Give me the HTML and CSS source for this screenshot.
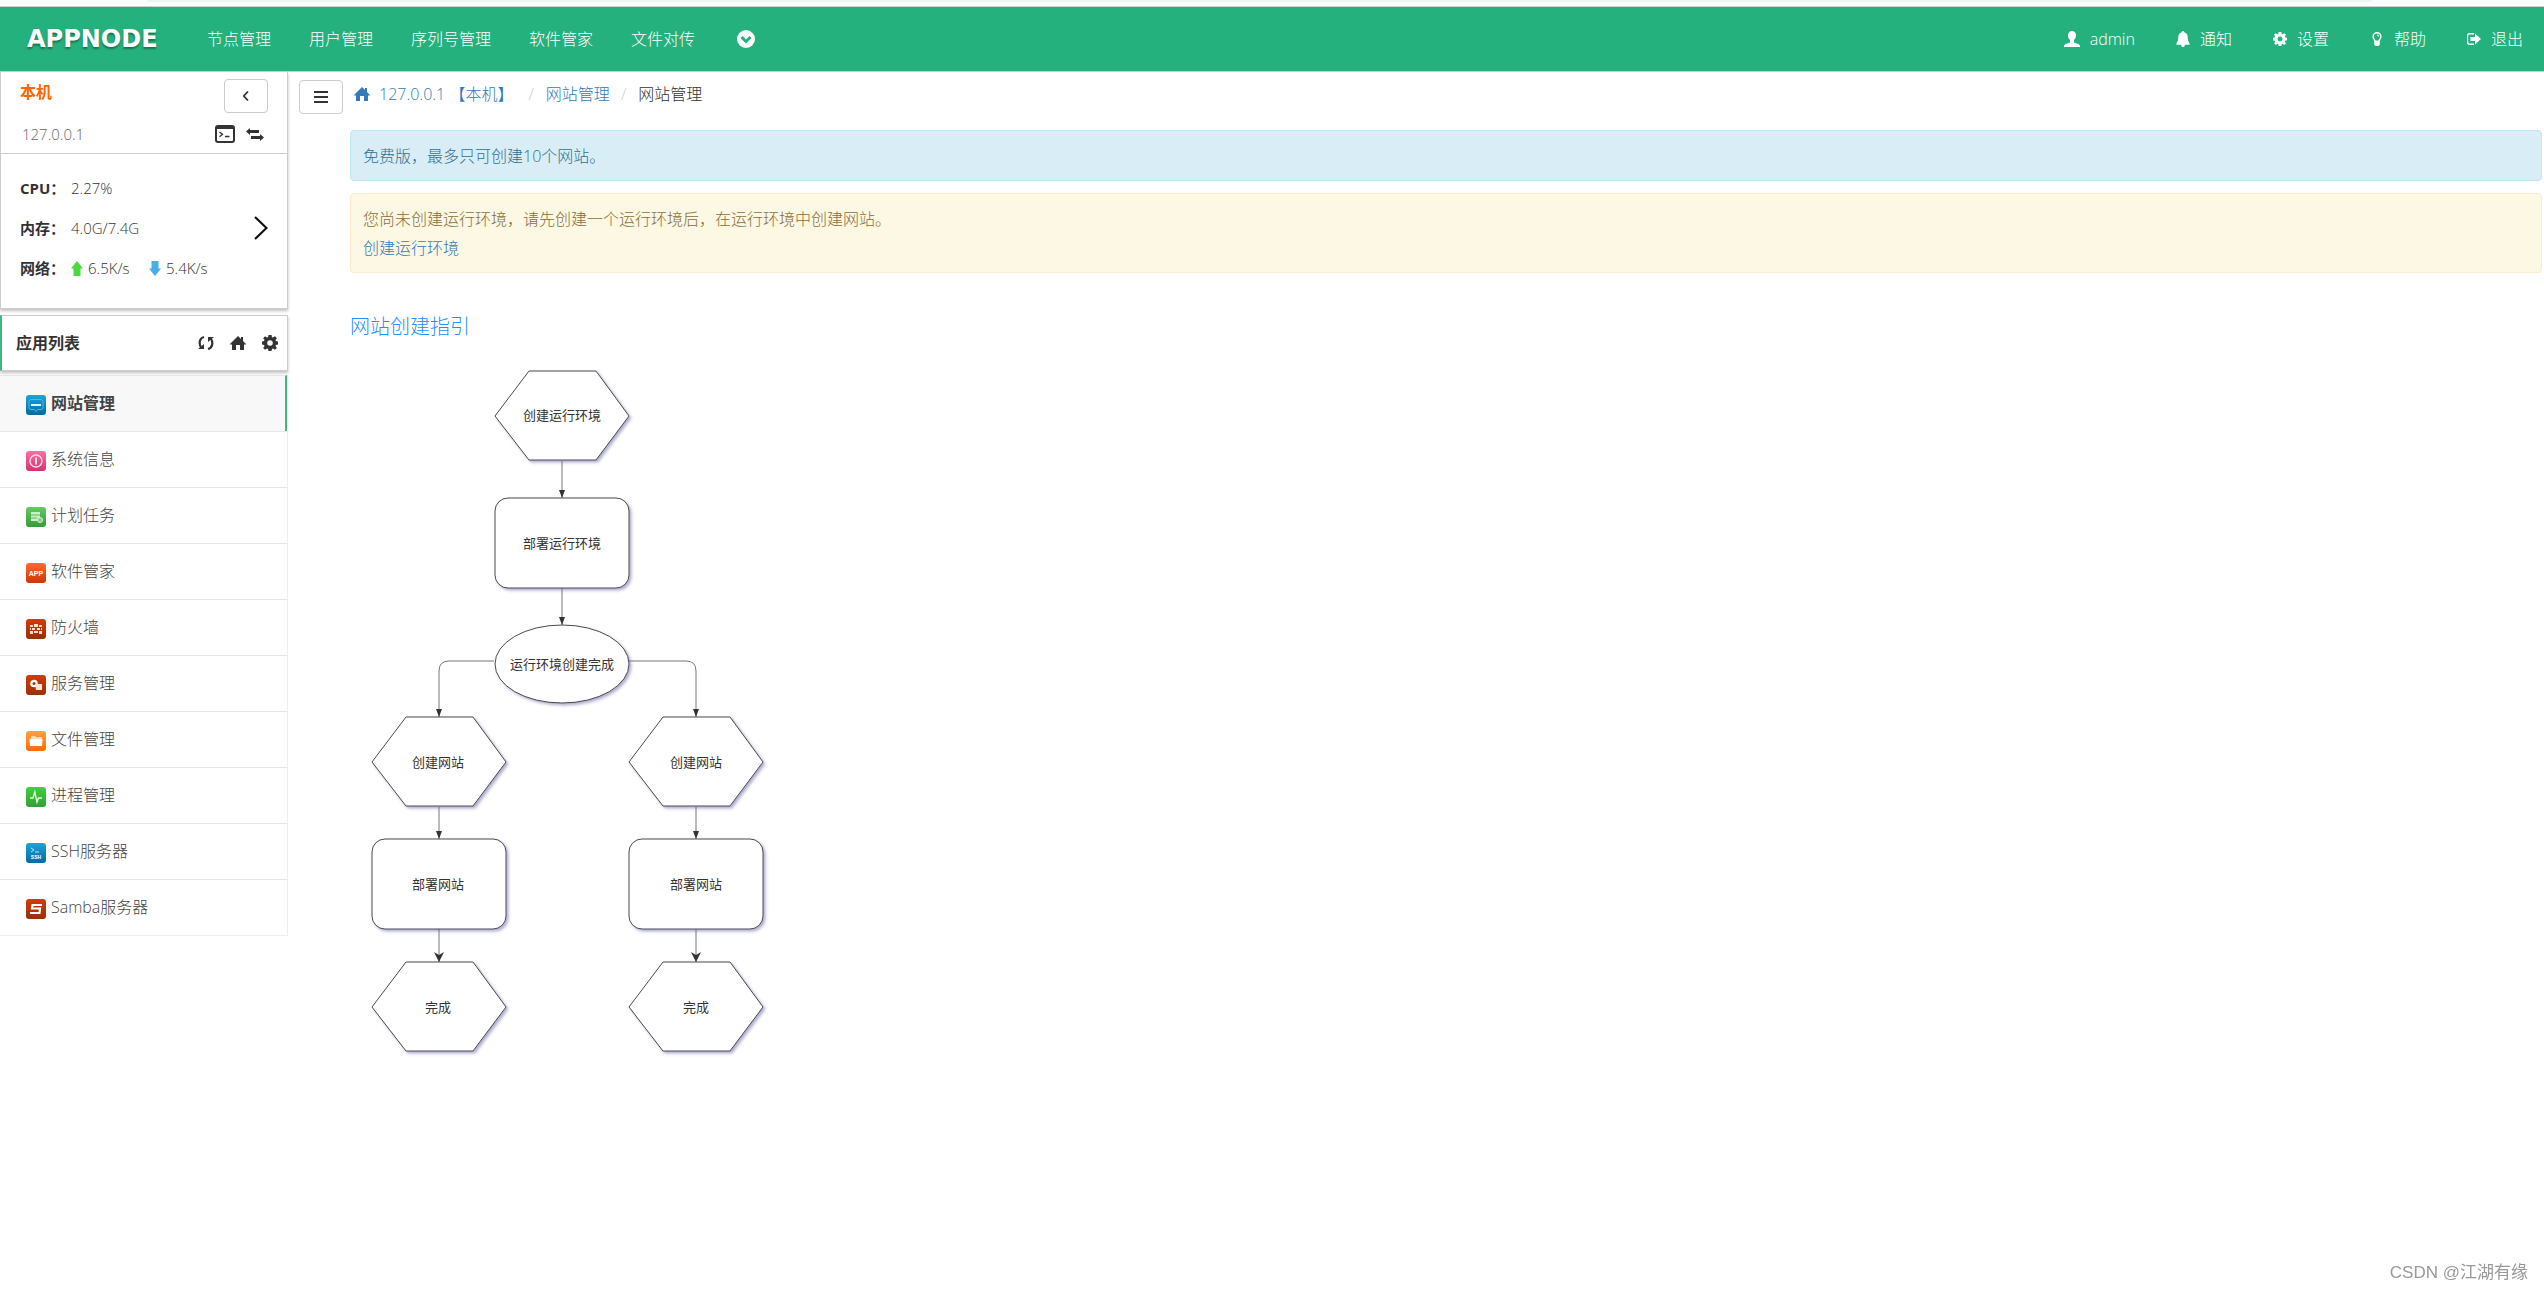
FILE: index.html
```html
<!DOCTYPE html>
<html lang="zh-CN">
<head>
<meta charset="utf-8">
<title>网站管理 - APPNODE</title>
<link rel="stylesheet" href="styles.css">
</head>
<body>
<svg class="sprite" aria-hidden="true">
  <defs>
    <symbol id="home" viewBox="0 0 16 16"><path d="M8 1 0 9l1 1 1-1v6h4v-5h4v5h4V9l1 1 1-1-3-3V2h-2v2z"/></symbol>
    <symbol id="gear" viewBox="0 0 16 16"><path fill-rule="evenodd" d="M6.500 0h3l.5 2.200 1 .4L13 1.300 14.900 3.200 13.500 5l.4 1L16 6.500v3l-2.100.5-.4 1 1.400 1.900-2 1.900L11 13.500l-1 .4L9.500 16h-3L6 13.900l-1-.4-1.900 1.300-1.900-1.900L2.500 11l-.4-1L0 9.500v-3L2.100 6l.4-1L1.200 3.200 3.100 1.300 5 2.600l1-.4zM8 5.200a2.800 2.800 0 1 0 0 5.600 2.800 2.800 0 0 0 0-5.600z"/></symbol>
    <linearGradient id="g-blue" x2="0" y2="1"><stop stop-color="#1ba4dc"/><stop offset="1" stop-color="#066aa0"/></linearGradient>
    <linearGradient id="g-pink" x2="0" y2="1"><stop stop-color="#ff6fa3"/><stop offset="1" stop-color="#d8306e"/></linearGradient>
    <linearGradient id="g-green" x2="0" y2="1"><stop stop-color="#62cb62"/><stop offset="1" stop-color="#379b37"/></linearGradient>
    <linearGradient id="g-orange" x2="0" y2="1"><stop stop-color="#ff6a35"/><stop offset="1" stop-color="#d13405"/></linearGradient>
    <linearGradient id="g-red" x2="0" y2="1"><stop stop-color="#d63b08"/><stop offset="1" stop-color="#983006"/></linearGradient>
    <linearGradient id="g-amber" x2="0" y2="1"><stop stop-color="#ffa043"/><stop offset="1" stop-color="#ff6a08"/></linearGradient>
    <linearGradient id="g-lime" x2="0" y2="1"><stop stop-color="#3ed23a"/><stop offset="1" stop-color="#369f36"/></linearGradient>
  </defs>
</svg>

<div class="tabstrip"><div class="tabstrip-bar"></div></div>

<header class="topbar">
  <a class="logo" href="#">APPNODE</a>
  <nav class="topnav">
    <a href="#">节点管理</a>
    <a href="#">用户管理</a>
    <a href="#">序列号管理</a>
    <a href="#">软件管家</a>
    <a href="#">文件对传</a>
    <button class="more" type="button" aria-label="更多">
      <svg width="18" height="18" viewBox="0 0 18 18"><circle cx="9" cy="9" r="9" fill="#fff"/><path d="M4.500 7 9 11.500 13.500 7" fill="none" stroke="#24b17d" stroke-width="3"/></svg>
    </button>
  </nav>
  <nav class="usernav">
    <a href="#"><svg class="wide" viewBox="0 0 16 16"><path d="M8 0c2.600 0 4 1.800 4 4.300 0 2-.8 3.600-2 4.700v2.500l3.500 1.200c1.600.5 2.500 1.300 2.500 3.300H0c0-2 .9-2.800 2.500-3.300L6 11.500V9C4.800 7.900 4 6.300 4 4.300 4 1.800 5.400 0 8 0z"/></svg>admin</a>
    <a href="#"><svg viewBox="0 0 14 17"><path d="M7 0c.9 0 1.200.5 1.300 1.200C10.800 1.800 12 3.700 12 6.500 12 9.500 12.500 11 14 13v1.500H9C8.800 16 8.200 17 7 17s-1.800-1-2-2.500H0V13c1.500-2 2-3.500 2-6.500 0-2.800 1.200-4.700 3.700-5.300C5.800.5 6.100 0 7 0z"/></svg>通知</a>
    <a href="#"><svg><use href="#gear"/></svg>设置</a>
    <a href="#"><svg viewBox="0 0 14 14"><path fill-rule="evenodd" d="M7 0a4.600 4.600 0 0 1 4.600 4.600c0 1.900-1.100 2.800-1.800 4.400v3.500L8.500 14h-3l-1.300-1.500V9C3.500 7.400 2.400 6.500 2.400 4.600A4.600 4.600 0 0 1 7 0zm0 1.500a3.100 3.100 0 0 0-3.100 3.100c0 1.400 1 2.300 1.600 3.900h3c.6-1.600 1.600-2.500 1.600-3.900A3.100 3.100 0 0 0 7 1.500zm0 1c1.300 0 2 .8 2.100 2H8c0-.6-.4-1-1-1z"/></svg>帮助</a>
    <a href="#"><svg viewBox="0 0 14 14"><path d="M7 1.700H2.500a2 2 0 0 0-2 2v6.600a2 2 0 0 0 2 2H7" fill="none" stroke="#fff" stroke-width="1.400"/><path d="M3.500 5H8V1.500L14 7l-6 5.500V9H3.500z"/></svg>退出</a>
  </nav>
</header>

<div class="layout">
  <aside class="sidebar">
    <section class="node">
      <div class="node-head">
        <div class="node-row">
          <strong class="node-name">本机</strong>
          <button class="btn" type="button" aria-label="收起"><svg width="6" height="10" viewBox="0 0 6 10"><path d="M5 .5.8 5 5 9.500" fill="none" stroke="#333" stroke-width="1.800"/></svg></button>
        </div>
        <div class="node-row addr">
          <span>127.0.0.1</span>
          <span class="tools">
            <button class="icon-btn" type="button" aria-label="终端"><svg width="20" height="18" viewBox="0 0 20 18"><rect x="1" y="1" width="18" height="16" rx="2" fill="#fff" stroke="#333" stroke-width="2"/><path d="M1 1h18v3H1z" fill="#333"/><path d="m4.500 7 3 2.300-3 2.500M10 11.500h4.500" fill="none" stroke="#333" stroke-width="1.400"/></svg></button>
            <button class="icon-btn" type="button" aria-label="切换"><svg width="18" height="13" viewBox="0 0 18 13"><path d="M0 3.500 4 0v2h9v3H4v2zM18 9.500 14 6v2H5v3h9v2z" fill="#333"/></svg></button>
          </span>
        </div>
      </div>
      <div class="stats">
        <dl>
          <div><dt>CPU：</dt><dd>2.27%</dd></div>
          <div><dt>内存：</dt><dd>4.0G/7.4G</dd></div>
          <div><dt>网络：</dt><dd><svg width="12" height="15" viewBox="0 0 12 15"><path d="M6 0l6 7.500H9.500V15h-7V7.500H0z" fill="#4cd93f"/></svg><span class="rate">6.5K/s</span><svg width="12" height="15" viewBox="0 0 12 15"><path d="M6 15l6-7.500H9.500V0h-7v7.500H0z" fill="#47aee6"/></svg><span>5.4K/s</span></dd></div>
        </dl>
        <button class="icon-btn" type="button" aria-label="详情"><svg width="14" height="24" viewBox="0 0 14 24"><path d="m1 1 11.500 11L1 23" fill="none" stroke="#111" stroke-width="2.200"/></svg></button>
      </div>
    </section>

    <section class="apps-head">
      <h2>应用列表</h2>
      <button class="icon-btn" type="button" aria-label="刷新"><svg width="16" height="16" viewBox="0 0 16 16"><path d="M6 2C1.500 3 .5 8.500 3.200 12.500M10 14c4.500-1 5.500-6.500 2.800-10.500" fill="none" stroke="#333" stroke-width="2.200"/><path d="M0 14h6V9zM16 2h-6v5z" fill="#333"/></svg></button>
      <button class="icon-btn" type="button" aria-label="首页"><svg width="16" height="16"><use href="#home"/></svg></button>
      <button class="icon-btn" type="button" aria-label="设置"><svg width="16" height="16"><use href="#gear"/></svg></button>
    </section>

    <nav class="apps">
      <a class="active" href="#"><svg viewBox="0 0 20 20"><rect width="20" height="20" rx="3" fill="url(#g-blue)"/><path d="M5 4.500h10a2 2 0 0 1 2 2v6a2 2 0 0 1-2 2h-3.500L10 16.500 8.500 14.500H5a2 2 0 0 1-2-2v-6a2 2 0 0 1 2-2z" fill="none" stroke="#4fb6e0"/><path d="M5 10h10" stroke="#d9f1fb" stroke-width="2"/></svg>网站管理</a>
      <a href="#"><svg viewBox="0 0 20 20"><rect width="20" height="20" rx="3" fill="url(#g-pink)"/><circle cx="10" cy="10" r="6" fill="none" stroke="#ffe0ec" stroke-width="1.400"/><path d="M10 6.500v7" stroke="#ffe0ec" stroke-width="2"/></svg>系统信息</a>
      <a href="#"><svg viewBox="0 0 20 20"><rect width="20" height="20" rx="3" fill="url(#g-green)"/><path d="M5 5h9v5.500a4 4 0 0 0-3 3.500H5z" fill="#c9f0c9"/><path d="M5 8h9M5 11h6" stroke="#5cb85c"/><circle cx="14" cy="13" r="2.500" fill="#7fd07f" stroke="#d7f5d7"/></svg>计划任务</a>
      <a href="#"><svg viewBox="0 0 20 20"><rect width="20" height="20" rx="3" fill="url(#g-orange)"/><text class="badge-text" x="10" y="13" font-size="7">APP</text></svg>软件管家</a>
      <a href="#"><svg viewBox="0 0 20 20"><rect width="20" height="20" rx="3" fill="url(#g-red)"/><path d="M4 6h3v2H4zM8 5h4v3H8zM13 6h3v2h-3zM6 9h3v2H6zM11 9h3v2h-3zM4 12h3v3H4zM8 12h4v2H8zM13 12h3v3h-3zM4 9h1v2H4zM15 9h1v2h-1z" fill="#ffe0d2"/></svg>防火墙</a>
      <a href="#"><svg viewBox="0 0 20 20"><rect width="20" height="20" rx="3" fill="url(#g-red)"/><circle cx="8" cy="8.500" r="2.700" fill="none" stroke="#fff" stroke-width="2.200"/><path d="M9 9h7v6h-6z" fill="#ffe4d8"/></svg>服务管理</a>
      <a href="#"><svg viewBox="0 0 20 20"><rect width="20" height="20" rx="3" fill="url(#g-amber)"/><path d="M5 5h4l1 1h6v2H5z" fill="#ffdcb5"/><path d="M3.500 8h13l-.5 7H4z" fill="#fff"/></svg>文件管理</a>
      <a href="#"><svg viewBox="0 0 20 20"><rect width="20" height="20" rx="3" fill="url(#g-lime)"/><path d="M4 11h3l1.800-6L11 15l1.500-4H16" fill="none" stroke="#dcffdc" stroke-width="1.400"/></svg>进程管理</a>
      <a href="#"><svg viewBox="0 0 20 20"><rect width="20" height="20" rx="3" fill="url(#g-blue)"/><path d="m5 5 3 2-3 2M9 9h4" fill="none" stroke="#b9e6f8"/><text class="badge-text" x="10" y="16" font-size="5">SSH</text></svg>SSH服务器</a>
      <a href="#"><svg viewBox="0 0 20 20"><rect width="20" height="20" rx="3" fill="url(#g-red)"/><path d="M16 6H6.500L6 9.500h8L13.500 14H4" fill="none" stroke="#fff" stroke-width="2.200"/></svg>Samba服务器</a>
    </nav>
  </aside>

  <main class="main">
    <div class="crumb-row">
      <button class="btn" type="button" aria-label="菜单"><svg width="14" height="12" viewBox="0 0 14 12"><path d="M0 1h14M0 6h14M0 11h14" stroke="#333" stroke-width="2"/></svg></button>
      <ol class="crumbs">
        <li><a class="host" href="#"><svg width="16" height="16"><use href="#home"/></svg>127.0.0.1 【本机】</a></li>
        <li><a href="#">网站管理</a></li>
        <li>网站管理</li>
      </ol>
    </div>
    <div class="content">
      <div class="alert info">免费版，最多只可创建10个网站。</div>
      <div class="alert warning">您尚未创建运行环境，请先创建一个运行环境后，在运行环境中创建网站。<br><a href="#">创建运行环境</a></div>
      <h1>网站创建指引</h1>
      <svg class="flow" width="440" height="720" viewBox="0 0 440 720" role="img" aria-label="网站创建流程">
        <defs>
          <filter id="shade" x="-10%" y="-10%" width="125%" height="125%"><feDropShadow dx="2" dy="2" stdDeviation="1.500" flood-color="#6a6aa8" flood-opacity=".55"/></filter>
          <marker id="tip" viewBox="0 0 8 8" refX="8" refY="4" markerWidth="8" markerHeight="6" markerUnits="userSpaceOnUse" orient="auto" preserveAspectRatio="none"><path d="M0 0 8 4 0 8z"/></marker>
          <marker id="tip-big" viewBox="0 0 10 10" refX="10" refY="5" markerWidth="10" markerHeight="10" markerUnits="userSpaceOnUse" orient="auto"><path d="M0 0 10 5 0 10 3 5z"/></marker>
        </defs>
        <g class="links">
          <path marker-end="url(#tip)" d="M212 111v37"/>
          <path marker-end="url(#tip)" d="M212 238v37"/>
          <path marker-end="url(#tip)" d="M144 311H99q-10 0-10 10v46"/>
          <path marker-end="url(#tip)" d="M279 311h57q10 0 10 10v46"/>
          <path marker-end="url(#tip)" d="M89 457v32"/>
          <path marker-end="url(#tip)" d="M346 457v32"/>
          <path marker-end="url(#tip-big)" d="M89 579v33"/>
          <path marker-end="url(#tip-big)" d="M346 579v33"/>
        </g>
        <g class="shapes">
          <path d="M145 66 179 21h67l33 45-33 44h-67z"/>
          <rect x="145" y="148" width="134" height="90" rx="13"/>
          <ellipse cx="212" cy="314" rx="67" ry="39"/>
          <path d="M22 412 56 367h67l33 45-33 44H56z"/>
          <path d="M279 412l34-45h67l33 45-33 44h-67z"/>
          <rect x="22" y="489" width="134" height="90" rx="13"/>
          <rect x="279" y="489" width="134" height="90" rx="13"/>
          <path d="M22 657l34-45h67l33 45-33 44H56z"/>
          <path d="M279 657l34-45h67l33 45-33 44h-67z"/>
        </g>
        <g class="labels">
          <text x="212" y="70">创建运行环境</text>
          <text x="212" y="198">部署运行环境</text>
          <text x="212" y="319">运行环境创建完成</text>
          <text x="88" y="417">创建网站</text>
          <text x="346" y="417">创建网站</text>
          <text x="88" y="539">部署网站</text>
          <text x="346" y="539">部署网站</text>
          <text x="88" y="662">完成</text>
          <text x="346" y="662">完成</text>
        </g>
      </svg>
    </div>
  </main>
</div>

<div class="watermark">CSDN @江湖有缘</div>
</body>
</html>
```
FILE: styles.css
```css
* { box-sizing: border-box; }

body {
  margin: 0;
  min-height: 100vh;
  background: #fff;
  color: #333;
  font: 300 16px/24px "Open Sans", "Noto Sans CJK SC", sans-serif;
}

a { color: #337ab7; text-decoration: none; }
svg { display: block; flex: none; fill: currentColor; }
button { font: inherit; color: inherit; cursor: pointer; }
.sprite { position: absolute; width: 0; height: 0; }

.tabstrip {
  height: 7px;
  padding: 0 172px 0 147px;
  border-bottom: 1px solid #d0d0d0;
}
.tabstrip-bar { height: 2px; background: #f1f3f4; border-radius: 0 0 8px 8px; }

/* top bar */
.topbar {
  display: flex;
  align-items: center;
  height: 65px;
  padding: 0 21px 0 27px;
  background: #24b17d;
  border-bottom: 1px solid #ccc;
}
.topbar a { color: #fff; }
.logo {
  width: 180px;
  font: bold 24px/32px "DejaVu Sans", sans-serif;
  text-shadow: 0 2px 2px rgba(0, 0, 0, .35);
}
.topnav { display: flex; align-items: center; gap: 38px; flex: 1; }
.more { margin-left: 4px; padding: 0; border: 0; background: none; }
.usernav { display: flex; gap: 41px; }
.usernav a { display: flex; align-items: center; gap: 10px; }
.usernav svg { width: 14px; height: 16px; }
.usernav .wide { width: 16px; }

.layout { display: flex; align-items: flex-start; }

/* sidebar */
.sidebar { width: 288px; flex: none; }
.btn {
  display: flex;
  align-items: center;
  justify-content: center;
  width: 44px;
  height: 34px;
  padding: 0;
  background: #fff;
  border: 1px solid #ccc;
  border-radius: 4px;
}
.icon-btn { padding: 0; border: 0; background: none; }

.node, .apps-head {
  border: 1px solid #ccc;
  box-shadow: 0 2px 3px rgba(0, 0, 0, .25);
}
.node { border-top: 0; }
.node-head { height: 82px; padding: 7px 19px 0; border-bottom: 1px solid #ccc; }
.node-row { display: flex; justify-content: space-between; }
.node-name { color: #f60; font-weight: bold; line-height: 26px; }
.addr { padding: 9px 4px 0 2px; font-size: 15px; color: #666; }
.tools { display: flex; align-items: center; gap: 11px; }
.stats {
  display: flex;
  align-items: center;
  justify-content: space-between;
  height: 154px;
  padding: 0 19px 6px;
  font-size: 15px;
}
.stats dl { margin: 0; }
.stats dl div { display: flex; height: 40px; align-items: center; }
.stats dt { width: 51px; font-weight: bold; white-space: nowrap; }
.stats dd { display: flex; align-items: center; gap: 5px; margin: 0; }
.rate { width: 56px; }

.apps-head {
  display: flex;
  align-items: center;
  gap: 16px;
  height: 56px;
  margin: 6px 0 4px;
  padding: 0 9px 0 14px;
  border-left: 2px solid #3fb682;
}
.apps-head h2 { flex: 1; margin: 0; font-size: 16px; font-weight: bold; }

.apps { border-right: 1px solid #eee; border-bottom: 1px solid #eee; }
.apps a {
  display: flex;
  align-items: center;
  gap: 5px;
  height: 56px;
  padding: 0 0 2px 26px;
  border-top: 1px solid #e7e7e7;
  color: #444;
}
.apps svg { width: 20px; height: 20px; margin-top: 4px; }
.apps .active { background: #f8f8f8; border-right: 2px solid #3fb682; font-weight: bold; }
.badge-text { font-family: "Liberation Sans", sans-serif; font-weight: bold; fill: #fff; text-anchor: middle; }

/* main column */
.main { flex: 1; min-width: 0; padding: 8px 2px 0 11px; }
.crumb-row { display: flex; gap: 11px; }
.crumbs { display: flex; margin: 0; padding: 2px 0 0; list-style: none; }
.crumbs li { display: flex; height: 24px; }
.crumbs li:nth-child(2) { padding-left: 4px; }
.crumbs li + li::before { content: "/"; color: #ccc; padding: 0 12px 0 11px; }
.host { display: flex; align-items: center; gap: 9px; }
.content { padding: 16px 0 0 51px; }
.alert {
  margin-bottom: 12px;
  padding: 11px 12px 9px;
  border: 1px solid;
  border-radius: 4px;
  line-height: 29px;
}
.info { color: #31708f; background: #d9edf7; border-color: #bce8f1; }
.warning { color: #8a6d3b; background: #fcf8e3; border-color: #faebcc; }
h1 { margin: 42px 0 11px; color: #1e90ff; font-size: 20px; font-weight: 300; line-height: 24px; }

/* flow diagram */
.shapes { fill: #fff; stroke: #4a4a4a; filter: url(#shade); }
.links { fill: none; stroke: #777; }
.links marker { fill: #111; stroke: none; }
.labels { fill: #333; font: 400 13px "Noto Sans CJK SC", sans-serif; text-anchor: middle; }

.watermark {
  position: fixed;
  right: 16px;
  bottom: 6px;
  color: #999;
  font: 400 17px/24px "Liberation Sans", "Noto Sans CJK SC", sans-serif;
}
```
